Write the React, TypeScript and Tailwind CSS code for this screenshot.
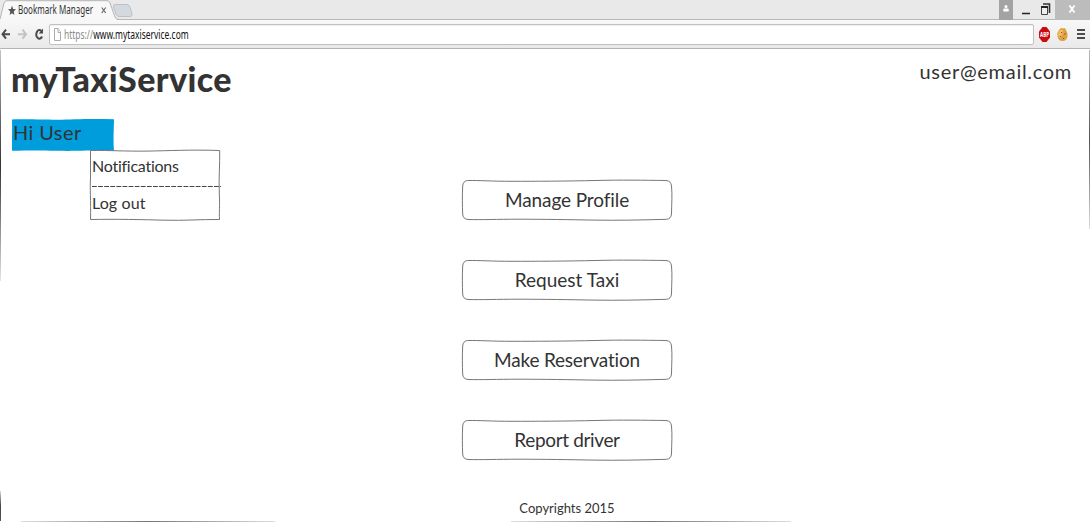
import type { ReactNode } from "react";

function SketchButton({ children }: { children: ReactNode }) {
  return (
    <button className="relative flex h-10 w-[210px] items-center justify-center pb-[2px] text-[19px] leading-none">
      <svg className="absolute inset-0 overflow-visible" width="210" height="40" fill="none" stroke="#777" strokeWidth="1">
        <path d="M5.5 .5C18 .3 28 1.3 50 1.3S105 1.2 133 .5S180 .2 204 .5Q209 .8 209.500 6C210.400 15 209.600 24 209.500 34Q209 39 204.500 39.300C180 40 155 40.500 132 40.100S80 39.200 57 39.200S20 39.900 6 39.500Q.8 39 .7 34C.3 25 .2 17 .7 6Q1 1 5.500 .5Z" />
      </svg>
      {children}
    </button>
  );
}

function BrowserChrome() {
  return (
    <header className="flex h-[50px] shrink-0 flex-col bg-white font-['Noto_Sans',sans-serif]">
      <div className="flex h-5 justify-between bg-[#e9e9e9] shadow-[inset_0_-1px_0_#b8b8b8]">
        <div className="relative flex h-5 w-[133px] items-center">
          <svg className="absolute inset-0" width="134" height="20">
            <path d="M0 20 4 3Q5 .7 7 .7H107Q109 .7 110 3L115 17Q116 20 118 20Z" fill="#f8f8f8" />
            <path d="M0 19 4 3Q5 .7 7 .7H107Q109 .7 110 3L115 17Q116 19.500 119 19.500" fill="none" stroke="#b5b5b5" />
            <path d="M115 4.500H127Q129 4.500 130 7L132 14Q132.500 16.500 130 16.500H119Q117 16.500 116 14L113.500 7Q113 4.500 115 4.500Z" fill="#d3d9de" stroke="#bdc1c4" />
            <path d="m12 5.500 1.100 3.500 2.900.2-2.300 2.200.7 3.600L12 13.200l-2.400 1.800.7-3.600L8 9.200l2.900-.2Z" fill="#555" />
            <path d="m101.700 7.500 4 5.500m0-5.500-4 5.500" stroke="#666" strokeWidth="1.200" />
          </svg>
          <span className="relative ml-[18px] origin-left scale-x-[0.67] text-[12px] leading-[20px] whitespace-nowrap text-[#333]">Bookmark Manager</span>
        </div>
        <div className="flex h-5">
          <div className="flex w-[14px] items-start justify-center bg-[#a3a3a3] pt-[5px]">
            <svg width="6" height="7" fill="#fff"><circle cx="3" cy="1.500" r="1.500" /><path d="M.3 6.500V4.500Q.3 3.500 1.500 3.500H4.500Q5.700 3.500 5.700 4.500V6.500Z" /></svg>
          </div>
          <svg width="42" height="20" fill="none">
            <path d="M9 13.500H17" stroke="#222" strokeWidth="1.500" />
            <path d="M30 4H36.500V13" stroke="#333" strokeWidth="1.600" />
            <path d="M28.500 6.500H34.500V14.500H28.500Z" fill="#eee" stroke="#444" />
            <path d="M28 7H35" stroke="#222" strokeWidth="2" />
          </svg>
          <div className="flex w-[35px] justify-center bg-[#bcbcbc]">
            <svg width="34" height="20"><path d="m13.500 5.500 5 7m0-7-5 7" stroke="#fff" strokeWidth="1.800" /></svg>
          </div>
        </div>
      </div>
      <div className="flex h-[29px] items-center border-b border-[#b5b5b5] bg-linear-to-b from-[#f8f8f8] to-[#e9e9e9]">
        <svg width="49" height="28" fill="none">
          <path d="M2.500 14.200H10M6 9.700 2.500 14.200 6 18.700" stroke="#4b4b4b" strokeWidth="2" />
          <path d="M18 14.200H26M22.500 9.700 26 14.200 22.500 18.700" stroke="#c3c3c3" strokeWidth="2" />
          <path d="M41.300 11A3 4.300 0 1 0 42 16.500" stroke="#4b4b4b" strokeWidth="2" />
          <path d="M43 8.500V13.500H38.800Z" fill="#4b4b4b" />
        </svg>
        <div className="flex h-[21px] w-[985px] items-center rounded-[2px] border border-[#c1c1c1] bg-white shadow-[inset_0_1px_1px_#eee]">
          <svg className="ml-[4px]" width="7" height="13" fill="#fff" stroke="#aaa"><path d="M.5 .5H4L6.500 4V12.500H.5Z" /><path d="M4 .5V4.500H6.500" /></svg>
          <span className="ml-[3px] origin-left scale-x-[0.705] pt-px text-[12px] leading-none whitespace-nowrap text-[#111]"><span className="text-[#8b8b8b]">https://</span>www.mytaxiservice.com</span>
        </div>
        <div className="flex items-center pl-[5px]">
          <svg className="overflow-visible" width="11" height="15"><path d="M3.500 0H7.500L11 4.500V10.500L7.500 15H3.500L0 10.500V4.500Z" fill="#cb0b0f" /><text x="5.500" y="9.800" textAnchor="middle" textLength="9" lengthAdjust="spacingAndGlyphs" fill="#fff" fontSize="6.500" fontWeight="bold">ABP</text></svg>
          <svg className="ml-[7px]" width="11" height="15">
            <path d="M2 3Q4 0 6 1.500Q8 0 9 3Q11 6 10.500 9Q10 14 5.500 14T.5 9Q0 5 2 3Z" fill="#dfa044" />
            <path d="M2 4Q4 2 6 3L5 8 3 11 1 8Z" fill="#f1bd66" />
            <path d="M4 5h1v1H4ZM7.500 6h1v1.500H7.500ZM3 9h1v1H3ZM6 11h1v1H6Z" fill="#8a5424" />
          </svg>
          <svg className="ml-[9px]" width="8" height="12" fill="#4c4c4c"><path d="M0 1H8V3H0ZM0 5H8V7H0ZM0 9H8V11H0Z" /></svg>
        </div>
      </div>
    </header>
  );
}

export default function App() {
  return (
    <div className="flex h-[522px] w-[1090px] flex-col overflow-hidden bg-white text-[#333]">
      <BrowserChrome />
      <div className="flex h-[472px] font-['Lato',sans-serif] [font-variant-ligatures:none]">
        <div className="flex w-px flex-col">
          <div className="h-[231px] bg-linear-to-b from-[#c4c4c4] via-[#333] to-[#e5e5e5]" />
          <div className="mt-[210px] h-[30px] bg-linear-to-b from-[#ddd] via-[#444] to-[#555]" />
        </div>
        <div className="flex w-[1088px] flex-col">
          <div className="flex h-[69px] items-start justify-between pr-[17px] pl-[10px]">
            <h1 className="pt-[10px] text-[34px] leading-[38px] font-black tracking-[0.4px]">myTaxiService</h1>
            <span className="pt-[9px] text-[20px] leading-[24px] tracking-[0.7px]">user@email.com</span>
          </div>
          <div className="relative ml-[11px] h-[32px] w-[102px]">
            <svg className="absolute inset-0 overflow-visible" width="102" height="32"><path d="M0 .4C20 .2 32 .9 46 .7S78-.5 102 .3C102 9 101 19 102 31.800C75 31.200 65 32.300 45 31.800S15 31.500 0 31.800C-.2 21 .4 10 0 .4Z" fill="#009ddc" /></svg>
            <span className="relative block pl-[1px] text-[20px] leading-[26px] tracking-[0.4px]">Hi User</span>
            <nav className="absolute top-[31px] left-[78px] h-[70px] w-[130px]">
              <svg className="absolute inset-0 overflow-visible" width="130" height="70" fill="none" stroke="#777"><path d="M.5 .5C20 .2 35 1.400 57 1.100S100-.5 129.700 .5C130 14 128.600 28 129.300 43S129 60 129.500 69.500C110 69.300 94 70.800 74 70.200S24 69 .5 69.500C1 50-.2 39 .5 28Z" /></svg>
              <div className="relative flex flex-col pl-[2px] text-[16px]">
                <span className="h-[35px] leading-[32px] tracking-[-0.25px]">Notifications</span>
                <svg width="129" height="2"><path d="M0 1.500H129" stroke="#444" strokeWidth="1" strokeDasharray="4.800 1.300" /></svg>
                <span className="leading-[32px] tracking-[0.1px]">Log out</span>
              </div>
            </nav>
          </div>
          <main className="mt-[29px] ml-[461px] flex flex-col gap-10">
            <SketchButton><span className="tracking-[-0.1px]">Manage Profile</span></SketchButton>
            <SketchButton><span>Request Taxi</span></SketchButton>
            <SketchButton><span className="tracking-[-0.2px]">Make Reservation</span></SketchButton>
            <SketchButton><span className="tracking-[-0.35px]">Report driver</span></SketchButton>
          </main>
          <footer className="mt-[40px] ml-[461px] flex h-[21px] w-[210px] justify-center text-[13px] leading-[17px]">Copyrights 2015</footer>
          <div className="flex h-px">
            <div className="ml-[20px] w-[254px] bg-linear-to-r from-[#ddd] via-[#777] to-[#ddd]" />
            <div className="ml-[236px] w-[280px] bg-linear-to-r from-[#ddd] via-[#777] to-[#ddd]" />
          </div>
        </div>
        <div className="h-[179px] w-px bg-linear-to-b from-[#bbb] via-[#555] to-[#ddd]" />
      </div>
    </div>
  );
}
